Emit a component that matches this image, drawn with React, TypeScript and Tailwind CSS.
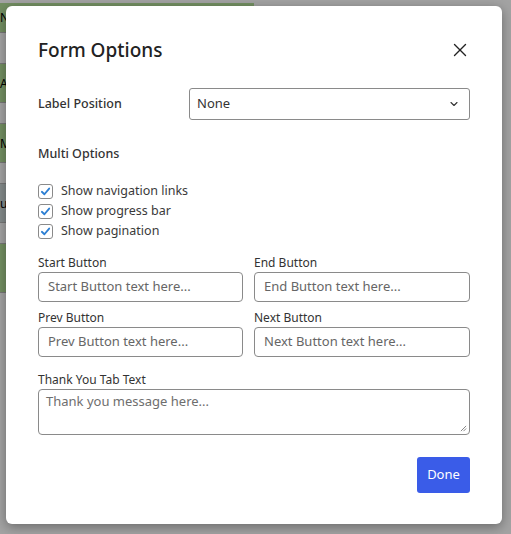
import React from "react";
import { X, ChevronDown } from "lucide-react";

const font = { fontFamily: '"Noto Sans", "Open Sans", sans-serif' };

function Check({ label }: { label: string }) {
  return (
    <label className="flex h-5 items-center gap-2">
      <span className="flex h-[15px] w-[15px] items-center justify-center rounded-[3px] border border-[#8a8a8a] bg-white">
        <svg viewBox="0 0 12 12" className="h-[11px] w-[11px]">
          <path d="M2 6.3 L4.8 9 L10 2.8" fill="none" stroke="#2d7fd3" strokeWidth="2" strokeLinecap="round" strokeLinejoin="round" />
        </svg>
      </span>
      <span className="text-[12.5px] text-[#3a3a3a]">{label}</span>
    </label>
  );
}

function Field({ label, placeholder }: { label: string; placeholder: string }) {
  return (
    <div className="flex flex-col">
      <span className="text-[12px] leading-[18px] text-[#333]">{label}</span>
      <div className="flex h-[30px] items-center rounded-[4px] border border-[#8a8a8a] px-[9px] text-[13px] text-[#666]">
        {placeholder}
      </div>
    </div>
  );
}

export default function App() {
  return (
    <div className="relative h-[534px] w-[511px] overflow-hidden bg-white" style={font}>
      {/* page underneath */}
      <div className="flex w-[254px] flex-col pt-[3px]">
        <div className="h-[30px] border-b border-[#bbb] bg-[#b4e09a] text-[12px] leading-[30px]">N</div>
        <div className="h-[30px] bg-[#fff]" />
        <div className="h-[40px] border-y border-[#bbb] bg-[#b4e09a] text-[12px] leading-[40px]">A</div>
        <div className="h-[20px] bg-[#fff]" />
        <div className="h-[40px] border-y border-[#bbb] bg-[#b4e09a] text-[12px] leading-[40px]">M</div>
        <div className="h-[20px] bg-[#fff]" />
        <div className="h-[40px] border-y border-[#bbb] bg-[#cfdada] text-[12px] leading-[40px]">ui</div>
        <div className="h-[20px] bg-[#fff]" />
        <div className="h-[50px] border-y border-[#bbb] bg-[#b4e09a]" />
      </div>

      {/* overlay */}
      <div className="absolute inset-0 bg-black/[0.36] p-[6px]">
        <div className="flex h-[518px] w-[496px] flex-col rounded-[6px] bg-white px-[32px] pt-[32px] shadow-[0_3px_12px_rgba(0,0,0,0.35)]">
          <div className="flex items-center justify-between">
            <h2 className="text-[19px] font-medium leading-[24px] text-[#222]">Form Options</h2>
            <X className="-mr-[1px] h-[22px] w-[22px] text-[#222]" strokeWidth={1.5} />
          </div>

          <div className="mt-[26px] flex items-center">
            <span className="w-[151px] text-[12.5px] font-medium text-[#333]">Label Position</span>
            <div className="flex h-[32px] flex-1 items-center justify-between rounded-[3px] border border-[#8a8a8a] pl-[7px] pr-[9px] text-[13px] text-[#333]">
              None
              <ChevronDown className="h-[12px] w-[12px] text-[#333]" strokeWidth={2.2} />
            </div>
          </div>

          <div className="mt-[24px] text-[12.5px] font-medium leading-[20px] text-[#333]">Multi Options</div>

          <div className="mt-[17px] flex flex-col">
            <Check label="Show navigation links" />
            <Check label="Show progress bar" />
            <Check label="Show pagination" />
          </div>

          <div className="mt-[13px] grid grid-cols-[205px_1fr] gap-x-[11px] gap-y-[7px]">
            <Field label="Start Button" placeholder="Start Button text here..." />
            <Field label="End Button" placeholder="End Button text here..." />
            <Field label="Prev Button" placeholder="Prev Button text here..." />
            <Field label="Next Button" placeholder="Next Button text here..." />
          </div>

          <div className="mt-[14px] flex flex-col">
            <span className="text-[12px] leading-[18px] text-[#333]">Thank You Tab Text</span>
            <div className="relative h-[46px] rounded-[4px] border border-[#8a8a8a] px-[7px] pt-[2px] text-[13px] text-[#6e6e6e]">
              Thank you message here...
              <svg viewBox="0 0 8 8" className="absolute bottom-[2px] right-[2px] h-[7px] w-[7px]">
                <path d="M7 1 L1 7 M7 4 L4 7" stroke="#777" strokeWidth="1" />
              </svg>
            </div>
          </div>

          <div className="mt-[22px] flex justify-end">
            <button className="h-[36px] w-[53px] rounded-[3px] bg-[#3a5ce8] text-[13px] text-white">Done</button>
          </div>
        </div>
      </div>
    </div>
  );
}
